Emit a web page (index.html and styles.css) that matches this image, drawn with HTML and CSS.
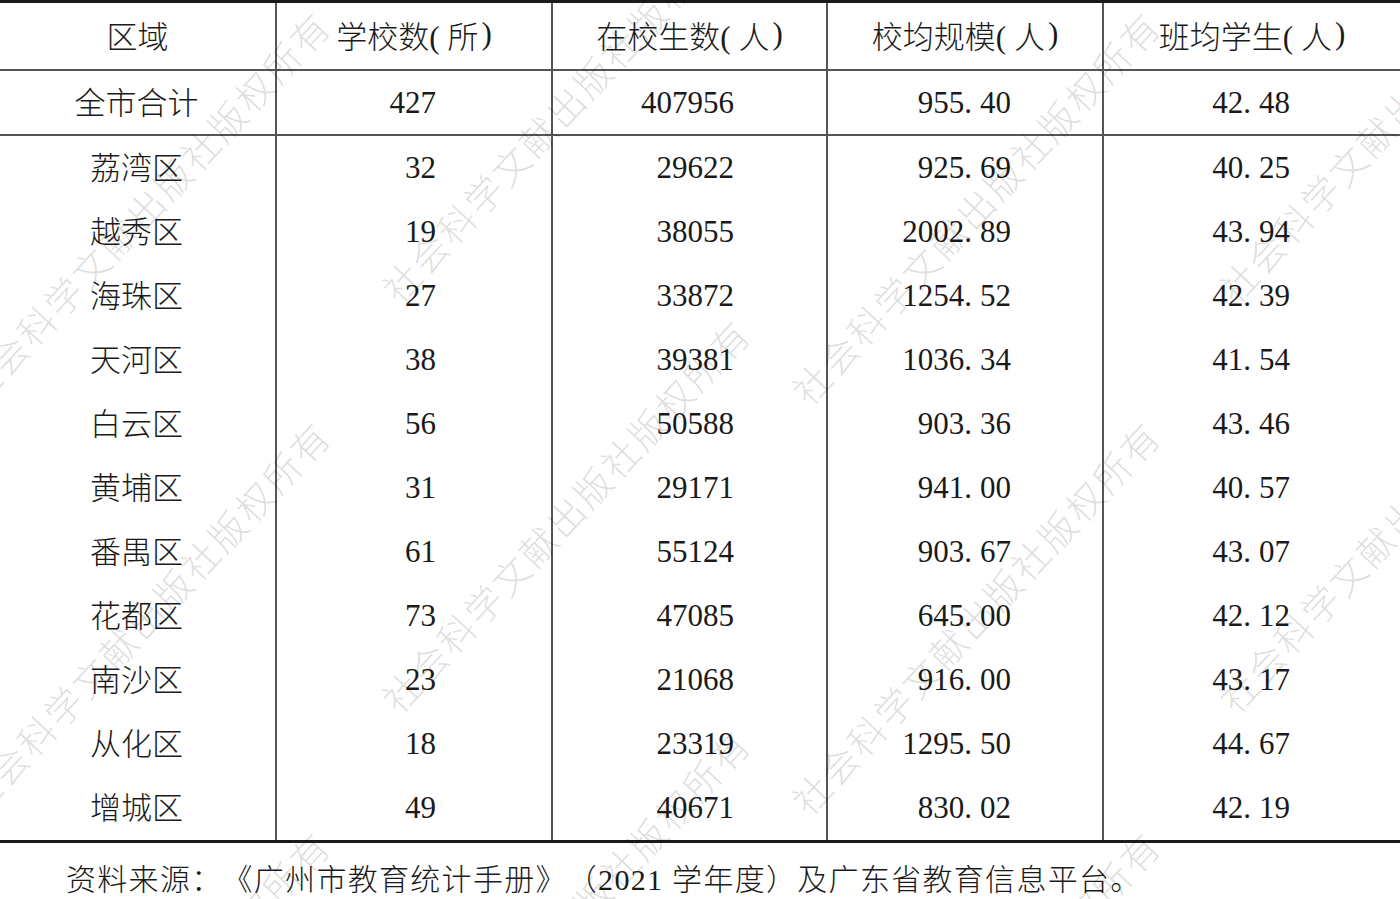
FILE: index.html
```html
<!DOCTYPE html>
<html lang="zh-CN">
<head>
<meta charset="utf-8">
<title>广州市学校统计</title>
<link rel="stylesheet" href="styles.css">
</head>
<body>
<div class="page">
  <div class="table">
    <div class="row head">
      <div class="cell">区域</div>
      <div class="cell">学校数(<span class="unit">所</span>)</div>
      <div class="cell">在校生数(<span class="unit">人</span>)</div>
      <div class="cell">校均规模(<span class="unit">人</span>)</div>
      <div class="cell">班均学生(<span class="unit">人</span>)</div>
    </div>
    <div class="row total">
      <div class="cell name">全市合计</div>
      <div class="cell num">427</div>
      <div class="cell num">407956</div>
      <div class="cell num">955<span class="pt">.</span>40</div>
      <div class="cell num">42<span class="pt">.</span>48</div>
    </div>
    <div class="body">
      <div class="row"><div class="cell name">荔湾区</div><div class="cell num">32</div><div class="cell num">29622</div><div class="cell num">925<span class="pt">.</span>69</div><div class="cell num">40<span class="pt">.</span>25</div></div>
      <div class="row"><div class="cell name">越秀区</div><div class="cell num">19</div><div class="cell num">38055</div><div class="cell num">2002<span class="pt">.</span>89</div><div class="cell num">43<span class="pt">.</span>94</div></div>
      <div class="row"><div class="cell name">海珠区</div><div class="cell num">27</div><div class="cell num">33872</div><div class="cell num">1254<span class="pt">.</span>52</div><div class="cell num">42<span class="pt">.</span>39</div></div>
      <div class="row"><div class="cell name">天河区</div><div class="cell num">38</div><div class="cell num">39381</div><div class="cell num">1036<span class="pt">.</span>34</div><div class="cell num">41<span class="pt">.</span>54</div></div>
      <div class="row"><div class="cell name">白云区</div><div class="cell num">56</div><div class="cell num">50588</div><div class="cell num">903<span class="pt">.</span>36</div><div class="cell num">43<span class="pt">.</span>46</div></div>
      <div class="row"><div class="cell name">黄埔区</div><div class="cell num">31</div><div class="cell num">29171</div><div class="cell num">941<span class="pt">.</span>00</div><div class="cell num">40<span class="pt">.</span>57</div></div>
      <div class="row"><div class="cell name">番禺区</div><div class="cell num">61</div><div class="cell num">55124</div><div class="cell num">903<span class="pt">.</span>67</div><div class="cell num">43<span class="pt">.</span>07</div></div>
      <div class="row"><div class="cell name">花都区</div><div class="cell num">73</div><div class="cell num">47085</div><div class="cell num">645<span class="pt">.</span>00</div><div class="cell num">42<span class="pt">.</span>12</div></div>
      <div class="row"><div class="cell name">南沙区</div><div class="cell num">23</div><div class="cell num">21068</div><div class="cell num">916<span class="pt">.</span>00</div><div class="cell num">43<span class="pt">.</span>17</div></div>
      <div class="row"><div class="cell name">从化区</div><div class="cell num">18</div><div class="cell num">23319</div><div class="cell num">1295<span class="pt">.</span>50</div><div class="cell num">44<span class="pt">.</span>67</div></div>
      <div class="row"><div class="cell name">增城区</div><div class="cell num">49</div><div class="cell num">40671</div><div class="cell num">830<span class="pt">.</span>02</div><div class="cell num">42<span class="pt">.</span>19</div></div>
    </div>
  </div>
  <p class="source">资料来源：《广州市教育统计手册》（2021 学年度）及广东省教育信息平台。</p>

  <div class="watermark" aria-hidden="true">
    <span class="wm wm-a">社会科学文献出版社版权所有</span>
    <span class="wm wm-g">社会科学文献出版社版权所有</span>
    <span class="wm wm-k">社会科学文献出版社版权所有</span>
    <span class="wm wm-j">社会科学文献出版社版权所有</span>
    <span class="wm wm-b">社会科学文献出版社版权所有</span>
    <span class="wm wm-h">社会科学文献出版社版权所有</span>
    <span class="wm wm-c">社会科学文献出版社版权所有</span>
    <span class="wm wm-e">社会科学文献出版社版权所有</span>
    <span class="wm wm-i">社会科学文献出版社版权所有</span>
    <span class="wm wm-d">社会科学文献出版社版权所有</span>
    <span class="wm wm-f">社会科学文献出版社版权所有</span>
  </div>
</div>
</body>
</html>
```

FILE: styles.css
```css
html, body {
  margin: 0;
  padding: 0;
  background: #ffffff;
}

body {
  font-family: "Liberation Serif", "Noto Sans CJK SC", serif;
  color: #1a1a1a;
}

.page {
  position: relative;
  width: 1400px;
  height: 899px;
  overflow: hidden;
}

.table {
  border-top: 3px solid #1a1a1a;
  border-bottom: 3px solid #1a1a1a;
}

.row {
  display: grid;
  grid-template-columns: 275px 276px 275px 276px 1fr;
  height: 64px;
}

.row.head {
  height: 66px;
  border-bottom: 2px solid #555555;
}

.row.head .cell {
  padding-bottom: 4px;
}

.row.total {
  height: 63px;
  border-bottom: 2px solid #555555;
}

.cell {
  display: flex;
  align-items: center;
  justify-content: center;
  font-size: 31px;
  font-weight: 300;
  white-space: nowrap;
}

.cell + .cell {
  border-left: 2px solid #555555;
}

.cell.num {
  justify-content: flex-end;
}

.cell.num:nth-child(2) { padding-right: 115px; }
.cell.num:nth-child(3) { padding-right: 92px; }
.cell.num:nth-child(4) { padding-right: 91px; }
.cell.num:nth-child(5) { padding-right: 110px; }

.cell.name {
  padding-right: 2px;
  padding-bottom: 5px;
}

.unit {
  margin-left: 8px;
  margin-right: 3px;
}

.pt {
  margin-right: 8px;
}

.source {
  margin: 17px 0 0 0;
  padding-left: 66px;
  font-size: 30px;
  line-height: 40px;
  font-weight: 300;
  letter-spacing: 1.3px;
  text-spacing-trim: space-all;
  white-space: nowrap;
}

.watermark {
  position: absolute;
  left: 0;
  top: 0;
  width: 1400px;
  height: 899px;
  pointer-events: none;
}

.wm {
  position: absolute;
  font-family: "Noto Sans CJK SC", sans-serif;
  font-weight: 300;
  font-size: 37px;
  line-height: 40px;
  letter-spacing: 3px;
  color: rgba(0, 0, 0, 0.14);
  white-space: nowrap;
  transform-origin: 0 50%;
  transform: rotate(-47deg);
}

.wm-a { left: -32px; top: 377px; }
.wm-g { left: -32px; top: 787px; }
.wm-k { left: -32px; top: 1197px; }
.wm-j { left: 388px; top: 275px; }
.wm-b { left: 388px; top: 685px; }
.wm-h { left: 388px; top: 1095px; }
.wm-c { left: 798px; top: 377px; }
.wm-e { left: 798px; top: 787px; }
.wm-i { left: 798px; top: 1197px; }
.wm-d { left: 1225px; top: 275px; }
.wm-f { left: 1225px; top: 685px; }
```
